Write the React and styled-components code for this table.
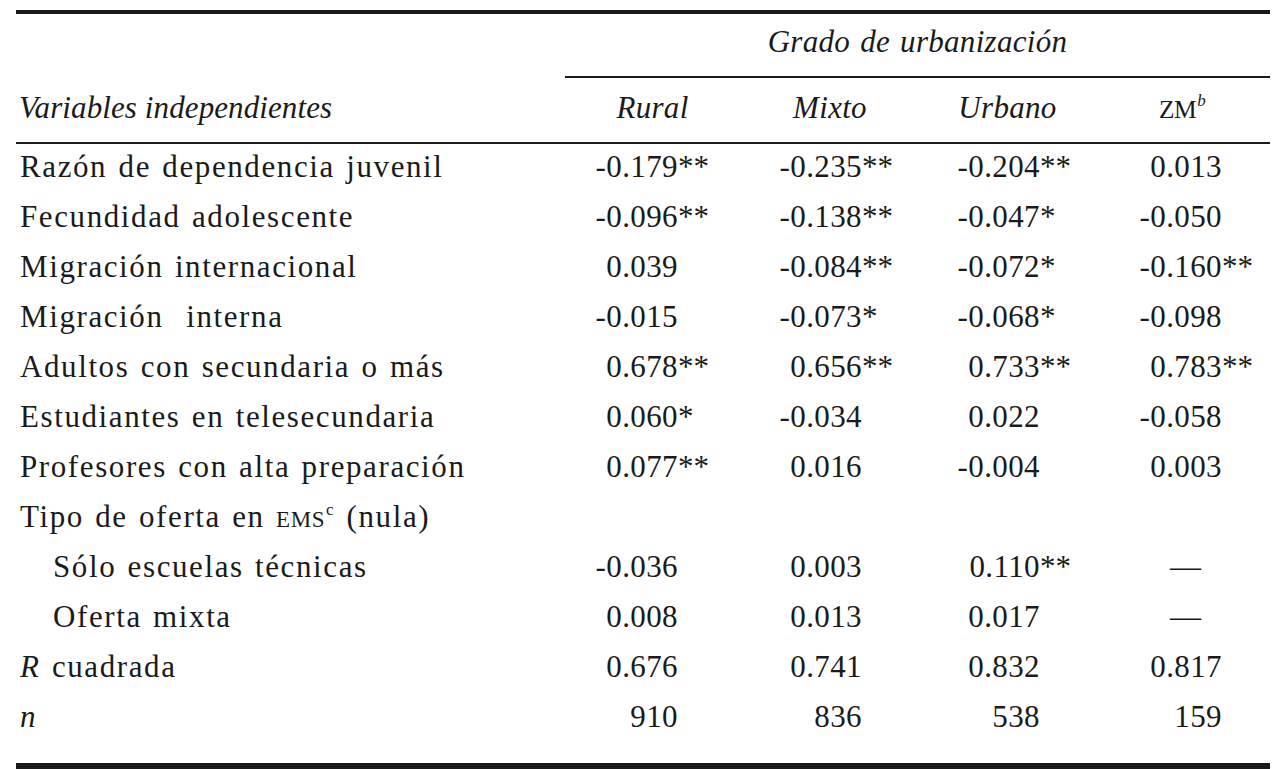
import React from "react";
import styled, { createGlobalStyle } from "styled-components";

const GlobalStyle = createGlobalStyle`
	html, body {
		margin: 0;
		padding: 0;
		background: #ffffff;
	}
	body {
		font-family: "Liberation Serif", "Times New Roman", serif;
		color: #1b1a1a;
	}
`;

// track widths: label, rural, mixto, urbano, zm
const TRACKS = "549px 175px 180px 175px 175px";
// where the last digit ends, counted from the track's left edge
const ANCHORS = [113, 122, 120, 127];

const getRows = () => [
	{ label: "Razón de dependencia juvenil", values: ["-0.179**", "-0.235**", "-0.204**", "0.013"] },
	{ label: "Fecundidad adolescente", values: ["-0.096**", "-0.138**", "-0.047*", "-0.050"] },
	{ label: "Migración internacional", values: ["0.039", "-0.084**", "-0.072*", "-0.160**"] },
	{ label: "Migración  interna", values: ["-0.015", "-0.073*", "-0.068*", "-0.098"] },
	{ label: "Adultos con secundaria o más", values: ["0.678**", "0.656**", "0.733**", "0.783**"] },
	{ label: "Estudiantes en telesecundaria", values: ["0.060*", "-0.034", "0.022", "-0.058"] },
	{ label: "Profesores con alta preparación", values: ["0.077**", "0.016", "-0.004", "0.003"] },
	{
		label: (
			<>
				Tipo de oferta en <SmallCaps>EMS</SmallCaps>
				<Sup>c</Sup> (nula)
			</>
		),
		values: [],
	},
	{ label: "Sólo escuelas técnicas", sub: true, values: ["-0.036", "0.003", "0.110**", "—"] },
	{ label: "Oferta mixta", sub: true, values: ["0.008", "0.013", "0.017", "—"] },
	{
		label: (
			<>
				<Ital>R</Ital> cuadrada
			</>
		),
		values: ["0.676", "0.741", "0.832", "0.817"],
	},
	{ label: <Ital>n</Ital>, values: ["910", "836", "538", "159"] },
];

function NumberCell({ value, col }) {
	if (value === "—") return <DashCell>—</DashCell>;
	const m = value.match(/^([^*]*)(\**)$/);
	return (
		<NumCell>
			<Digits $w={ANCHORS[col]}>{m[1]}</Digits>
			<Stars>{m[2]}</Stars>
		</NumCell>
	);
}

export default function App() {
	const rows = getRows();
	return (
		<>
			<GlobalStyle />
			<Table>
				<ThickRule />
				<GroupRow>
					<span />
					<GroupTitle>Grado de urbanización</GroupTitle>
				</GroupRow>
				<HeadRow>
					<HeadLabel>Variables independientes</HeadLabel>
					<HeadCell>Rural</HeadCell>
					<HeadCell>Mixto</HeadCell>
					<HeadCell>Urbano</HeadCell>
					<HeadCell>
						<ZmCaps>ZM</ZmCaps>
						<Sup $italic>b</Sup>
					</HeadCell>
				</HeadRow>
				<Body>
					{rows.map((row, i) => (
						<DataRow key={i}>
							<Label $sub={row.sub}>{row.label}</Label>
							{row.values.map((v, j) => (
								<NumberCell key={j} value={v} col={j} />
							))}
						</DataRow>
					))}
				</Body>
				<ThickRule $h={6} />
			</Table>
		</>
	);
}

const Table = styled.div`
	width: 1254px;
	margin: 0 0 0 16px;
	padding-top: 10px;
	font-size: 31px;
`;

const ThickRule = styled.div`
	height: ${(p) => p.$h || 4}px;
	background: #1b1a1a;
`;

const GroupRow = styled.div`
	display: grid;
	grid-template-columns: 549px 1fr;
	height: 64px;
`;

const GroupTitle = styled.div`
	font-style: italic;
	text-align: center;
	letter-spacing: 0.3px;
	word-spacing: 2px;
	border-bottom: 2px solid #1b1a1a;
	line-height: 56px;
	padding-bottom: 6px;
`;

const HeadRow = styled.div`
	display: grid;
	grid-template-columns: ${TRACKS};
	height: 64px;
	border-bottom: 2px solid #1b1a1a;
	font-style: italic;
	line-height: 60px;
	letter-spacing: 0.3px;
`;

const HeadLabel = styled.div`
	padding-left: 3px;
	letter-spacing: 0.1px;
`;

const HeadCell = styled.div`
	text-align: center;
`;

const ZmCaps = styled.span`
	font-style: normal;
	font-size: 0.82em;
	letter-spacing: -0.5px;
`;

const Body = styled.div`
	padding-bottom: 19px;
`;

const DataRow = styled.div`
	display: grid;
	grid-template-columns: ${TRACKS};
	height: 50px;
	line-height: 46px;
	padding-bottom: 4px;
	box-sizing: border-box;
	white-space: pre;
`;

const Label = styled.div`
	padding-left: ${(p) => (p.$sub ? 37 : 4)}px;
	letter-spacing: 1.6px;
	word-spacing: 2px;
`;

const NumCell = styled.div`
	display: flex;
	letter-spacing: 0.4px;
`;

const Digits = styled.span`
	width: ${(p) => p.$w}px;
	text-align: right;
	flex: none;
`;

const Stars = styled.span`
	letter-spacing: 0;
`;

const DashCell = styled.div`
	text-align: center;
	padding-left: 6px;
`;

const Ital = styled.span`
	font-style: italic;
`;

const SmallCaps = styled.span`
	font-size: 0.74em;
	letter-spacing: 0.6px;
`;

const Sup = styled.sup`
	font-size: 0.55em;
	font-style: ${(p) => (p.$italic ? "italic" : "normal")};
	vertical-align: 0.7em;
	line-height: 0;
	margin-left: 1px;
`;
